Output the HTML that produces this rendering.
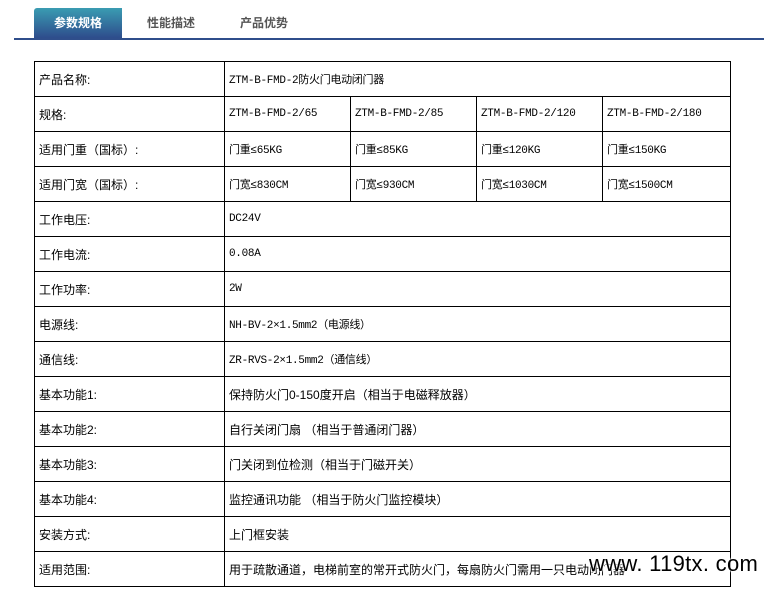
<!DOCTYPE html>
<html><head><meta charset="utf-8"><style>
body{margin:0;background:#fff;width:768px;height:600px;overflow:hidden;position:relative;font-family:"Liberation Sans","WenQuanYi Zen Hei","Noto Sans CJK SC",sans-serif;}
.tab{position:absolute;top:8px;height:30px;line-height:31px;font-size:12px;font-weight:bold;color:#555;text-align:center;}
.t1{left:34px;width:88px;background:linear-gradient(#3a9cb2,#2e4c8c);color:#fff;border-top-left-radius:3px;}
.line{position:absolute;left:14px;top:38px;width:750px;height:2px;background:#2f4e8b;}
table{position:absolute;left:34px;top:61px;border-collapse:collapse;width:696px;table-layout:fixed;}
td{border:1px solid #000;height:34px;padding:0 0 0 4px;font-size:12px;color:#000;}
.m{font-family:"Liberation Mono","WenQuanYi Zen Hei",monospace;font-size:11px;letter-spacing:-0.3px;}
.wm{position:absolute;left:589px;top:551px;font-size:22px;letter-spacing:0.3px;color:#000;font-family:"Liberation Sans",sans-serif;text-shadow:0 0 2px #fff,0 0 2px #fff,0 0 2px #fff;white-space:pre;}
</style></head><body>
<div class="tab t1">参数规格</div>
<div class="tab" style="left:122px;width:98px">性能描述</div>
<div class="tab" style="left:220px;width:88px">产品优势</div>
<div class="line"></div>
<table>
<colgroup><col style="width:190px"><col style="width:126px"><col style="width:126px"><col style="width:126px"><col style="width:128px"></colgroup>
<tr><td>产品名称:</td><td colspan="4" class="m">ZTM-B-FMD-2防火门电动闭门器</td></tr>
<tr><td>规格:</td><td class="m">ZTM-B-FMD-2/65</td><td class="m">ZTM-B-FMD-2/85</td><td class="m">ZTM-B-FMD-2/120</td><td class="m">ZTM-B-FMD-2/180</td></tr>
<tr><td>适用门重（国标）:</td><td class="m">门重≤65KG</td><td class="m">门重≤85KG</td><td class="m">门重≤120KG</td><td class="m">门重≤150KG</td></tr>
<tr><td>适用门宽（国标）:</td><td class="m">门宽≤830CM</td><td class="m">门宽≤930CM</td><td class="m">门宽≤1030CM</td><td class="m">门宽≤1500CM</td></tr>
<tr><td>工作电压:</td><td colspan="4" class="m">DC24V</td></tr>
<tr><td>工作电流:</td><td colspan="4" class="m">0.08A</td></tr>
<tr><td>工作功率:</td><td colspan="4" class="m">2W</td></tr>
<tr><td>电源线:</td><td colspan="4" class="m">NH-BV-2×1.5mm2（电源线）</td></tr>
<tr><td>通信线:</td><td colspan="4" class="m">ZR-RVS-2×1.5mm2（通信线）</td></tr>
<tr><td>基本功能1:</td><td colspan="4">保持防火门0-150度开启（相当于电磁释放器）</td></tr>
<tr><td>基本功能2:</td><td colspan="4">自行关闭门扇 （相当于普通闭门器）</td></tr>
<tr><td>基本功能3:</td><td colspan="4">门关闭到位检测（相当于门磁开关）</td></tr>
<tr><td>基本功能4:</td><td colspan="4">监控通讯功能 （相当于防火门监控模块）</td></tr>
<tr><td>安装方式:</td><td colspan="4">上门框安装</td></tr>
<tr><td>适用范围:</td><td colspan="4">用于疏散通道，电梯前室的常开式防火门，每扇防火门需用一只电动闭门器</td></tr>
</table>
<div class="wm">www. 119tx. com</div>
</body></html>
